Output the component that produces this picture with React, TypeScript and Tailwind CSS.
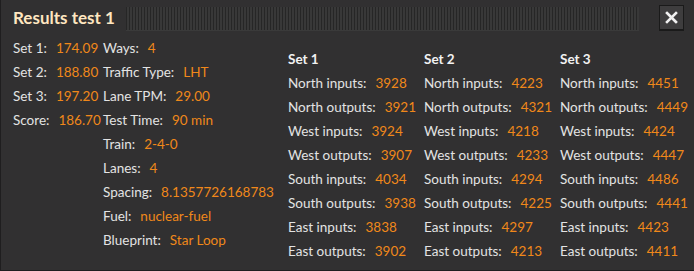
import React from 'react';

const summary = [
  { label: 'Set 1:', value: '174.09' },
  { label: 'Set 2:', value: '188.80' },
  { label: 'Set 3:', value: '197.20' },
  { label: 'Score:', value: '186.70' },
];

const settings = [
  { label: 'Ways:', value: '4' },
  { label: 'Traffic Type:', value: 'LHT' },
  { label: 'Lane TPM:', value: '29.00' },
  { label: 'Test Time:', value: '90 min' },
  { label: 'Train:', value: '2-4-0' },
  { label: 'Lanes:', value: '4' },
  { label: 'Spacing:', value: '8.1357726168783' },
  { label: 'Fuel:', value: 'nuclear-fuel' },
  { label: 'Blueprint:', value: 'Star Loop' },
];

const labels = [
  'North inputs:',
  'North outputs:',
  'West inputs:',
  'West outputs:',
  'South inputs:',
  'South outputs:',
  'East inputs:',
  'East outputs:',
];

const sets = [
  { name: 'Set 1', values: ['3928', '3921', '3924', '3907', '4034', '3938', '3838', '3902'] },
  { name: 'Set 2', values: ['4223', '4321', '4218', '4233', '4294', '4225', '4297', '4213'] },
  { name: 'Set 3', values: ['4451', '4449', '4424', '4447', '4486', '4441', '4423', '4411'] },
];

function Row({ label, value }: { label: string; value: string }) {
  return (
    <div className="h-6 flex items-center gap-[9px] whitespace-nowrap">
      <span className="text-[#e3e3e3]">{label}</span>
      <span className="text-[#f0881a]">{value}</span>
    </div>
  );
}

export default function App() {
  return (
    <div
      className="w-[694px] h-[271px] bg-[#313031] border-l border-b border-[#1f1e1f] overflow-hidden text-[13.5px]"
      style={{ fontFamily: 'Lato, "Open Sans", sans-serif' }}
    >
      {/* Title bar */}
      <div className="h-9 flex items-center pl-3 pr-[10px] gap-[11px]">
        <h1 className="text-[17px] font-bold text-[#ffe6c0] whitespace-nowrap">Results test 1</h1>
        <div className="flex-1 h-6 mt-[1px] bg-[repeating-linear-gradient(90deg,#262626_0px,#262626_1px,#383838_1px,#383838_3px)] border-b border-[#3a3a3a]" />
        <button className="ml-[9px] w-[25px] h-[26px] bg-[#3e3d3e] border border-[#1a1a1a] border-b-2 flex items-center justify-center">
          <svg width="13" height="13" viewBox="0 0 13 13">
            <path d="M2 2 L11 11 M11 2 L2 11" stroke="#f0f0f0" strokeWidth="2.6" strokeLinecap="square" />
          </svg>
        </button>
      </div>

      {/* Content */}
      <div className="flex pl-3">
        <div className="flex gap-[6px]">
          <div className="w-[84px]">
            {summary.map((s) => (
              <Row key={s.label} label={s.label} value={s.value} />
            ))}
          </div>
          <div className="w-[180px]">
            {settings.map((s) => (
              <Row key={s.label} label={s.label} value={s.value} />
            ))}
          </div>
        </div>

        <div className="flex pt-[11px] ml-[5px]">
          {sets.map((set) => (
            <div key={set.name} className="w-[136px]">
              <div className="h-6 flex items-center font-bold text-[#f2f2f2]">{set.name}</div>
              {labels.map((l, i) => (
                <Row key={l} label={l} value={set.values[i]} />
              ))}
            </div>
          ))}
        </div>
      </div>
    </div>
  );
}
